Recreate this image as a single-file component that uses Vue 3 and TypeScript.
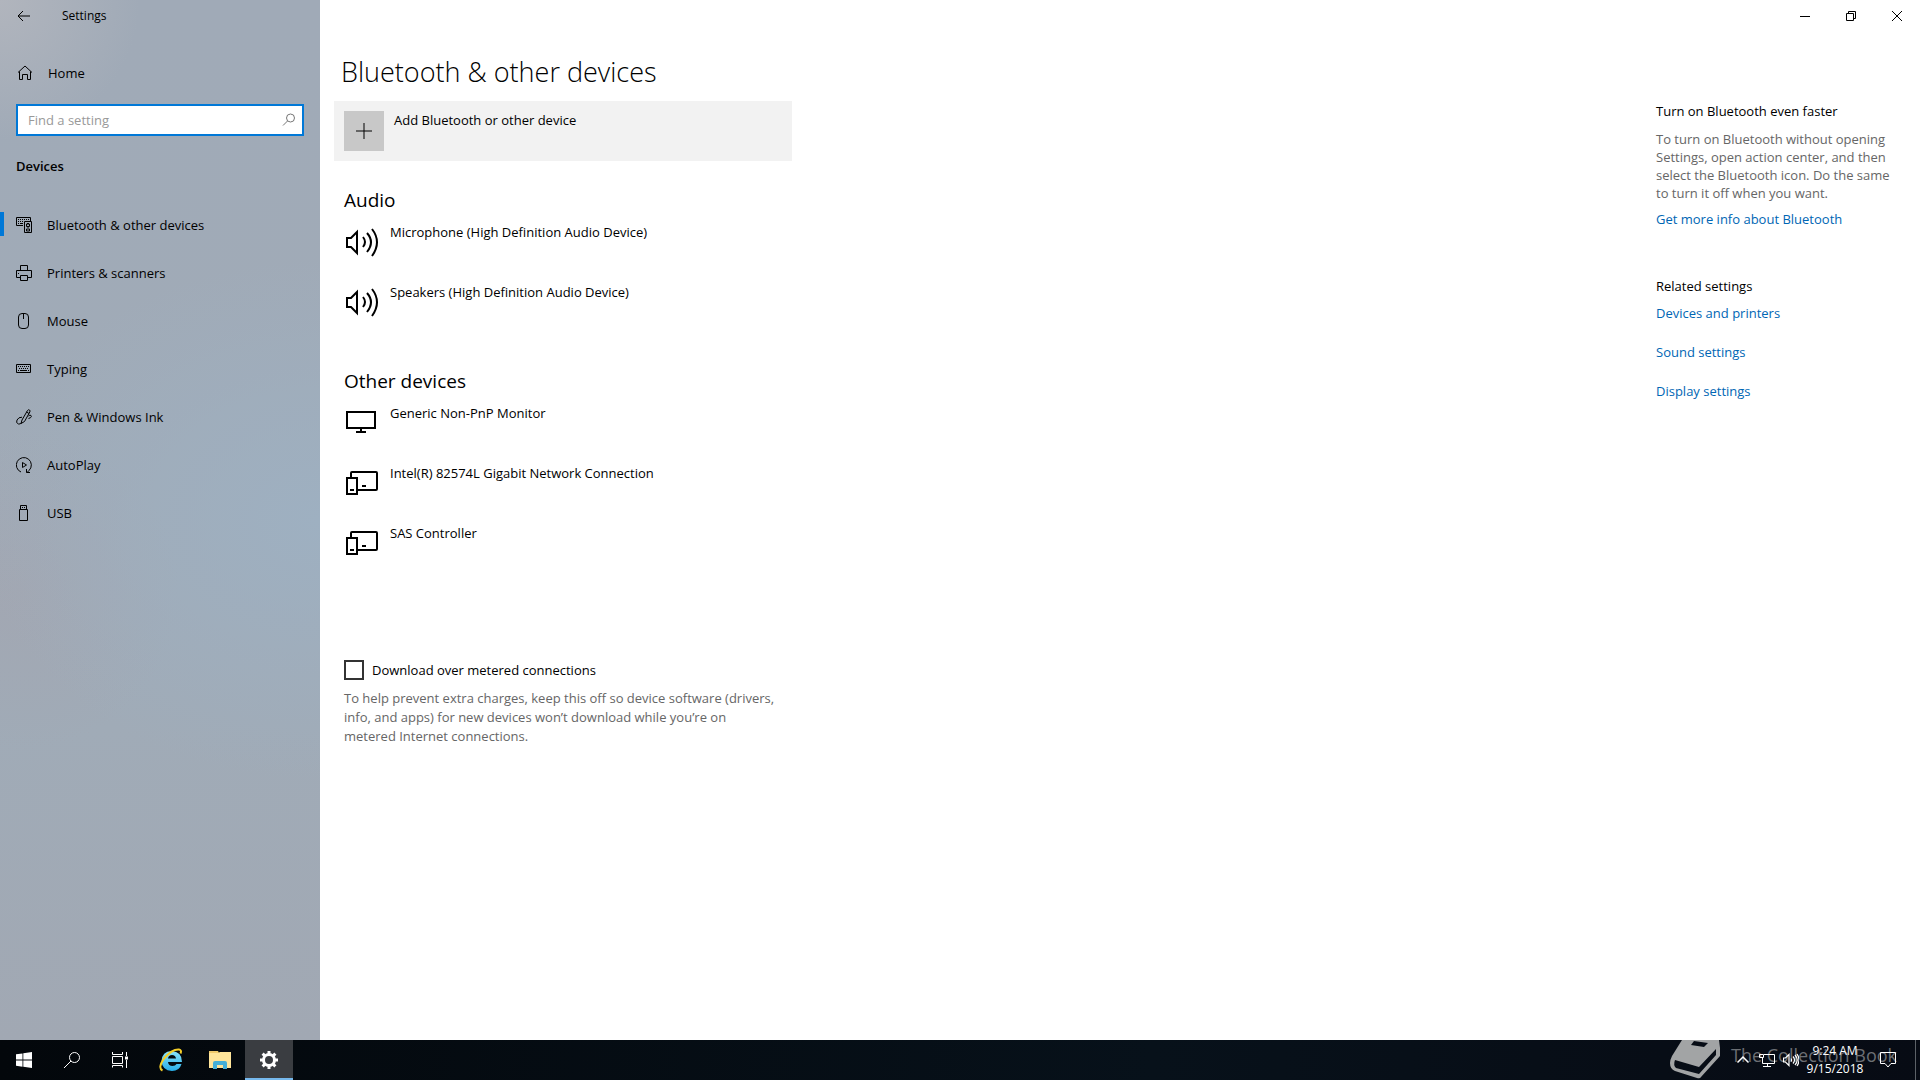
<script setup lang="ts">
import { ref } from 'vue'

interface NavItem {
  label: string
  icon: string
}

interface Device {
  name: string
  kind: 'audio' | 'monitor' | 'device'
}

interface DeviceGroup {
  title: string
  devices: Device[]
}

const navItems: NavItem[] = [
  {
    label: 'Bluetooth & other devices',
    icon: 'M7 8.5H.5v-8h14V4M2 2.5h1m1 0h1m1 0h1m1 0h1m1 0h1m1 0h1M2 4.5h1m1 0h1m1 0h1M2 6.5h1m1 0h3M8.5 4.5h7v11h-7zM10.5 7v2.5h3V7zM11 6.5h2M12 10v1M10.5 12v2h3v-2z',
  },
  { label: 'Printers & scanners', icon: 'M4.5 5V.5h7V5M4 12.5H.5v-7h15v7H12M4.5 10.5h7v5h-7zM2 8.5h1' },
  { label: 'Mouse', icon: 'M6 .5h3Q12.500 .5 12.500 4v8Q12.500 15.500 9 15.500H6Q2.500 15.500 2.500 12V4Q2.500 .5 6 .5zM7.500 1v5' },
  { label: 'Typing', icon: 'M.5 3.500h14v8H.5zM2 5.500h1m1 0h1m1 0h1m1 0h1m1 0h1m1 0h1M3 7.500h1m1 0h1m1 0h1m1 0h1m1 0h1M2 9.500h1m1 0h7m1 0h1' },
  {
    label: 'Pen & Windows Ink',
    icon: 'M5 14.500L6 11 11.500 1.500Q12.500 .2 13.500 1T13.800 3L8.500 12.500zM10.500 3L13 4.500M6 8.200Q2.500 8 1 11T2.500 15Q4.500 15.500 5.500 13.500M12.500 7Q14 5.500 15 6.500T14.500 8.700L12.500 9.500',
  },
  { label: 'AutoPlay', icon: 'M5 15A7.500 7.500 0 1 1 13 13.500L11 15.500M10.500 12v3.500H14M6.500 5.500v5L10.500 8z' },
  { label: 'USB', icon: 'M4.500 5V.5h6V5M3.500 4.500h8v11h-8zM6 2.500h1m1 0h1' },
]

const groups: DeviceGroup[] = [
  {
    title: 'Audio',
    devices: [
      { name: 'Microphone (High Definition Audio Device)', kind: 'audio' },
      { name: 'Speakers (High Definition Audio Device)', kind: 'audio' },
    ],
  },
  {
    title: 'Other devices',
    devices: [
      { name: 'Generic Non-PnP Monitor', kind: 'monitor' },
      { name: 'Intel(R) 82574L Gigabit Network Connection', kind: 'device' },
      { name: 'SAS Controller', kind: 'device' },
    ],
  },
]

const deviceIcons: Record<Device['kind'], string> = {
  audio: 'M3 13h4l6-6v21l-6-6H3zM19 12q4 5 0 10M23 8q8 9 0 19M28 4q10 13 0 27',
  monitor: 'M3 6h28v16H3zM17 22v4M12 26h10',
  device: 'M7 11V7q0-1 1-1h24q1 0 1 1v16q0 1-1 1H14M3 12h10v16H3zM18 20h4M6 24h4',
}

const relatedLinks: string[] = ['Devices and printers', 'Sound settings', 'Display settings']

const query = ref('')
const metered = ref(false)
const current = ref(0)
</script>

<template>
  <div class="desktop">
    <div class="window">
      <aside class="sidebar">
        <div class="title">
          <button class="back" aria-label="Back">
            <svg width="14" height="12" viewBox="0 0 14 12"><path d="M13 6H1M6 1L1 6l5 5" /></svg>
          </button>
          <span>Settings</span>
        </div>

        <a href="#" class="home">
          <svg width="16" height="16" viewBox="0 0 16 16"><path d="M1 7.500L8 1l7 6.500M2.500 6.500v8h3v-5h5v5h3v-8" /></svg>
          <span>Home</span>
        </a>

        <div class="search">
          <input v-model="query" type="text" placeholder="Find a setting" aria-label="Find a setting" />
          <svg width="14" height="14" viewBox="0 0 14 14"><circle cx="8.500" cy="5" r="4" /><path d="M5.500 8L1 12.500" /></svg>
        </div>

        <h2>Devices</h2>

        <nav>
          <a
            v-for="(item, i) in navItems"
            :key="item.label"
            href="#"
            :class="{ active: i === current }"
            @click.prevent="current = i"
          >
            <svg width="16" height="16" viewBox="0 0 16 16"><path :d="item.icon" /></svg>
            <span>{{ item.label }}</span>
          </a>
        </nav>
      </aside>

      <div class="content">
        <header class="caption">
          <button aria-label="Minimize">
            <svg width="10" height="10" viewBox="0 0 10 10"><path d="M0 5.500h10" /></svg>
          </button>
          <button aria-label="Restore">
            <svg width="10" height="10" viewBox="0 0 10 10"><path d="M.5 2.500h7v7h-7zM2.500 2V.5h7v7H8" /></svg>
          </button>
          <button aria-label="Close">
            <svg width="10" height="10" viewBox="0 0 10 10"><path d="M0 0l10 10M10 0L0 10" /></svg>
          </button>
        </header>

        <div class="columns">
          <main>
            <h1>Bluetooth &amp; other devices</h1>
            <button class="add">
              <span class="plus">
                <svg width="16" height="16" viewBox="0 0 16 16"><path d="M8 0v16M0 8h16" /></svg>
              </span>
              <span>Add Bluetooth or other device</span>
            </button>

            <section v-for="group in groups" :key="group.title">
              <h3>{{ group.title }}</h3>
              <ul>
                <li v-for="device in group.devices" :key="device.name">
                  <svg width="36" height="34" viewBox="0 0 36 34"><path :d="deviceIcons[device.kind]" /></svg>
                  <span>{{ device.name }}</span>
                </li>
              </ul>
            </section>

            <label class="check">
              <input v-model="metered" type="checkbox" />
              <span>Download over metered connections</span>
            </label>
            <p class="note">
              To help prevent extra charges, keep this off so device software (drivers, info, and apps) for new
              devices won’t download while you’re on metered Internet connections.
            </p>
          </main>

          <aside class="tips">
            <h4>Turn on Bluetooth even faster</h4>
            <p>
              To turn on Bluetooth without opening Settings, open action center, and then select the Bluetooth icon.
              Do the same to turn it off when you want.
            </p>
            <a href="#">Get more info about Bluetooth</a>
            <h4 class="related">Related settings</h4>
            <ul>
              <li v-for="link in relatedLinks" :key="link"><a href="#">{{ link }}</a></li>
            </ul>
          </aside>
        </div>
      </div>
    </div>

    <footer class="taskbar">
      <div class="watermark">
        <svg width="50" height="40" viewBox="0 0 50 40">
          <path
            fill-rule="evenodd"
            d="M12 0h37l1 8v8L31 37q-1 2-4 1L5 31q-5-2-5-8 0-3 2-7zM24 1l-3 4 13 2 4-4zM5 20q-2 5 1 8l23 6L46 15V9L29 27z"
          />
        </svg>
        <span>The Collection Book</span>
      </div>

      <div class="apps">
        <button aria-label="Start">
          <svg width="16" height="16" viewBox="0 0 16 16"><path class="fill" d="M0 2.300L6.500 1.400v6.200H0zM7.300 1.300L16 0v7.600H7.300zM0 8.400h6.500v6.300L0 13.800zM7.300 8.400H16V16l-8.700-1.200z" /></svg>
        </button>
        <button aria-label="Search">
          <svg width="16" height="16" viewBox="0 0 16 16"><circle cx="10.500" cy="5.500" r="5" /><path d="M7 9L0 16" /></svg>
        </button>
        <button class="taskview" aria-label="Task View">
          <svg width="16" height="16" viewBox="0 0 16 16"><path d="M.5 0v2.500h10V0M.5 4.500h10v7H.5zM.5 15.500v-2h10v2M14.500 0v4M14.500 8v8" /><path class="fill" d="M13 4.500h3v3h-3z" /></svg>
        </button>
        <button aria-label="Internet Explorer">
          <svg width="24" height="24" viewBox="0 0 24 24">
            <defs>
              <linearGradient id="ie" x1="0" y1="0" x2="0" y2="1">
                <stop offset="0" stop-color="#8be4fa" />
                <stop offset="1" stop-color="#27aee8" />
              </linearGradient>
            </defs>
            <path
              fill="url(#ie)"
              stroke="none"
              fill-rule="evenodd"
              d="M23 14H9q.5 4 4.500 4 3 0 4-2h5q-2 7-9.500 7Q3 22.500 2.500 13 3 3.500 12.500 3 23 3.500 23 14zM9 10.500h8q-.5-3.500-4-3.500t-4 3.500z"
            />
            <path class="ring" d="M3.500 22.500Q-1.500 20 5 10.500 13 1 20 1.500q3 .5 1.500 4" />
          </svg>
        </button>
        <button aria-label="File Explorer">
          <svg width="24" height="24" viewBox="0 0 24 24">
            <path fill="#f0ca6b" stroke="none" d="M1 3h9l1 2h12v15H1z" />
            <path fill="#ffe59a" stroke="none" d="M1 5h9l2-1h11v16H1z" />
            <path fill="#45b0d8" stroke="none" d="M5 21v-6q0-2 2-2h10q2 0 2 2v6h-4v-4H9v4z" />
          </svg>
        </button>
        <button class="running" aria-label="Settings">
          <svg width="18" height="18" viewBox="0 0 18 18">
            <circle cx="9" cy="9" r="5.500" stroke-width="3" />
            <path stroke-width="3" d="M9 0v3M9 15v3M0 9h3M15 9h3M2.600 2.600l2.200 2.200M13.200 13.200l2.200 2.200M2.600 15.400l2.200-2.200M13.200 4.800l2.200-2.200" />
          </svg>
        </button>
      </div>

      <div class="tray">
        <button aria-label="Show hidden icons">
          <svg width="16" height="16" viewBox="0 0 16 16"><path stroke-width="1.500" d="M2.500 10.500L8 5l5.500 5.500" /></svg>
        </button>
        <button aria-label="Network">
          <svg width="16" height="16" viewBox="0 0 16 16"><path d="M5 2.500h10.500v9H3.500V6M.5 2.500h4v3h-4zM8.500 12v3M4 14.500h8" /></svg>
        </button>
        <button aria-label="Volume">
          <svg width="16" height="16" viewBox="0 0 16 16"><path stroke-width="1.200" d="M.5 6h2L6 2.500v11L2.500 10h-2zM8 6.500q1 1.500 0 3M10 4.500q3 3.500 0 7M12 3q4.500 5 0 10M14 2q4 6 0 12" /></svg>
        </button>
        <button class="clock"><span>9:24 AM</span><span>9/15/2018</span></button>
        <button class="notifications" aria-label="Notifications">
          <svg width="16" height="16" viewBox="0 0 16 16"><path d="M.5.5h15v11H11L8 15l-3-3.500H.5z" /></svg>
        </button>
        <button class="peek" aria-label="Show desktop"></button>
      </div>
    </footer>
  </div>
</template>

<style>
body {
  margin: 0;
}
</style>

<style scoped>
.desktop {
  display: flex;
  flex-direction: column;
  min-height: 100vh;
  font-family: "Open Sans", "Noto Sans", sans-serif;
  font-size: 13px;
  line-height: 18px;
  color: #000;
}
* {
  box-sizing: border-box;
}
h1, h2, h3, h4, p, ul {
  margin: 0;
  padding: 0;
  font-weight: 400;
}
ul {
  list-style: none;
}
a {
  color: inherit;
  text-decoration: none;
}
button {
  border: 0;
  padding: 0;
  margin: 0;
  background: none;
  font: inherit;
  color: inherit;
}
svg {
  display: block;
  flex: none;
  fill: none;
  stroke: currentColor;
}
.window {
  flex: 1;
  display: flex;
  background: #fff;
}
.sidebar {
  flex: none;
  width: 320px;
  background:
    radial-gradient(circle at 0 0, #b1b5bd, transparent 140px),
    radial-gradient(ellipse 340px 260px at 320px 520px, #9eb0c1, transparent),
    radial-gradient(ellipse 160px 160px at 20px 590px, #a2a7b2, transparent),
    linear-gradient(#a0aab7 0, #a0abb7 70%, #a1a8b3 100%);
}
.title {
  display: flex;
  align-items: center;
  height: 32px;
  font-size: 12px;
}
.back {
  display: flex;
  align-items: center;
  padding-left: 17px;
  width: 62px;
  height: 32px;
}
.home {
  display: flex;
  align-items: center;
  gap: 15px;
  height: 40px;
  margin: 21px 0 11px;
  padding-left: 17px;
}
.search {
  display: flex;
  align-items: center;
  height: 32px;
  margin: 0 16px;
  padding-right: 6px;
  border: 2px solid #0078d7;
  background: #fff;
  color: #767676;
}
.search input {
  flex: 1;
  min-width: 0;
  padding: 0 0 0 10px;
  border: 0;
  outline: 0;
  background: none;
  font: inherit;
  color: #000;
}
.search input::placeholder {
  color: #999;
  opacity: 1;
}
h2 {
  margin: 21px 16px 26px;
  font-size: 13px;
  line-height: 18px;
  font-weight: 600;
}
nav a {
  display: flex;
  align-items: center;
  gap: 15px;
  height: 48px;
  padding-left: 16px;
}
nav a.active {
  background: linear-gradient(#0078d7, #0078d7) 0 11px / 4px 24px no-repeat;
}
.content {
  flex: 1;
  min-width: 0;
}
.caption {
  display: flex;
  justify-content: flex-end;
  height: 32px;
}
.caption button {
  display: grid;
  place-items: center;
  width: 46px;
}
.columns {
  display: flex;
  justify-content: space-between;
  padding: 20px 24px 0 14px;
}
main {
  width: 458px;
}
h1 {
  padding-left: 7px;
  font-size: 27px;
  line-height: 40px;
  margin-bottom: 9px;
  font-weight: 300;
}
.add {
  display: flex;
  align-items: flex-start;
  gap: 10px;
  width: 100%;
  padding: 10px;
  margin-bottom: 25px;
  background: #f2f2f2;
  text-align: left;
}
.plus {
  display: grid;
  place-items: center;
  width: 40px;
  height: 40px;
  background: #c8c8c8;
}
section {
  padding-left: 10px;
  margin-bottom: 24px;
}
h3 {
  font-size: 19px;
  line-height: 28px;
  margin-bottom: 9px;
}
li {
  display: flex;
}
main li {
  height: 60px;
  gap: 10px;
}
main li svg {
  stroke-width: 2;
  margin-top: 2px;
}
.check {
  display: flex;
  align-items: center;
  gap: 8px;
  height: 20px;
  margin: 76px 0 9px 10px;
}
.check input {
  appearance: none;
  width: 20px;
  height: 20px;
  margin: 0;
  border: 2px solid #333;
  background: #fff;
}
.check input:checked {
  background: #0078d7;
}
.note {
  padding: 0 16px 0 10px;
  line-height: 19px;
  color: #666;
}
.tips {
  width: 240px;
  padding-top: 50px;
}
.tips p {
  margin: 10px 0 8px;
  color: #666;
}
.tips a {
  color: #0066b4;
}
.tips .related {
  margin: 49px 0 9px;
}
.tips li {
  height: 39px;
}
.taskbar {
  position: relative;
  display: flex;
  justify-content: space-between;
  height: 40px;
  background: linear-gradient(90deg, #03070b, #07111a 60%, #070b14);
  color: #fff;
}
.watermark {
  position: absolute;
  top: 0;
  right: 23px;
  display: flex;
  align-items: flex-start;
  gap: 11px;
  color: #6c6f74;
  font-size: 18px;
  line-height: 30px;
}
.watermark svg {
  fill: #a2a4a5;
  stroke: none;
}
.apps, .tray {
  position: relative;
  display: flex;
}
.apps button, .tray button {
  display: grid;
  place-items: center;
}
.apps button {
  width: 48px;
  margin-right: 1px;
}
.apps button:nth-child(-n + 2) {
  margin-right: 0;
}
.apps .taskview {
  margin-right: 3px;
}
.apps .running {
  margin-right: 0;
  background: #3a3d41;
  box-shadow: inset 0 -2px #76b9ed;
}
.fill {
  fill: currentColor;
  stroke: none;
}
.ring {
  stroke: #f5ce28;
  stroke-width: 2;
}
.tray button {
  width: 24px;
}
.tray .clock {
  display: flex;
  flex-direction: column;
  align-items: center;
  justify-content: center;
  width: 64px;
  font-size: 12px;
  line-height: 18px;
}
.tray .notifications {
  width: 42px;
  margin-right: 6px;
}
.tray .peek {
  width: 5px;
  border-left: 1px solid #5c6167;
}
</style>
